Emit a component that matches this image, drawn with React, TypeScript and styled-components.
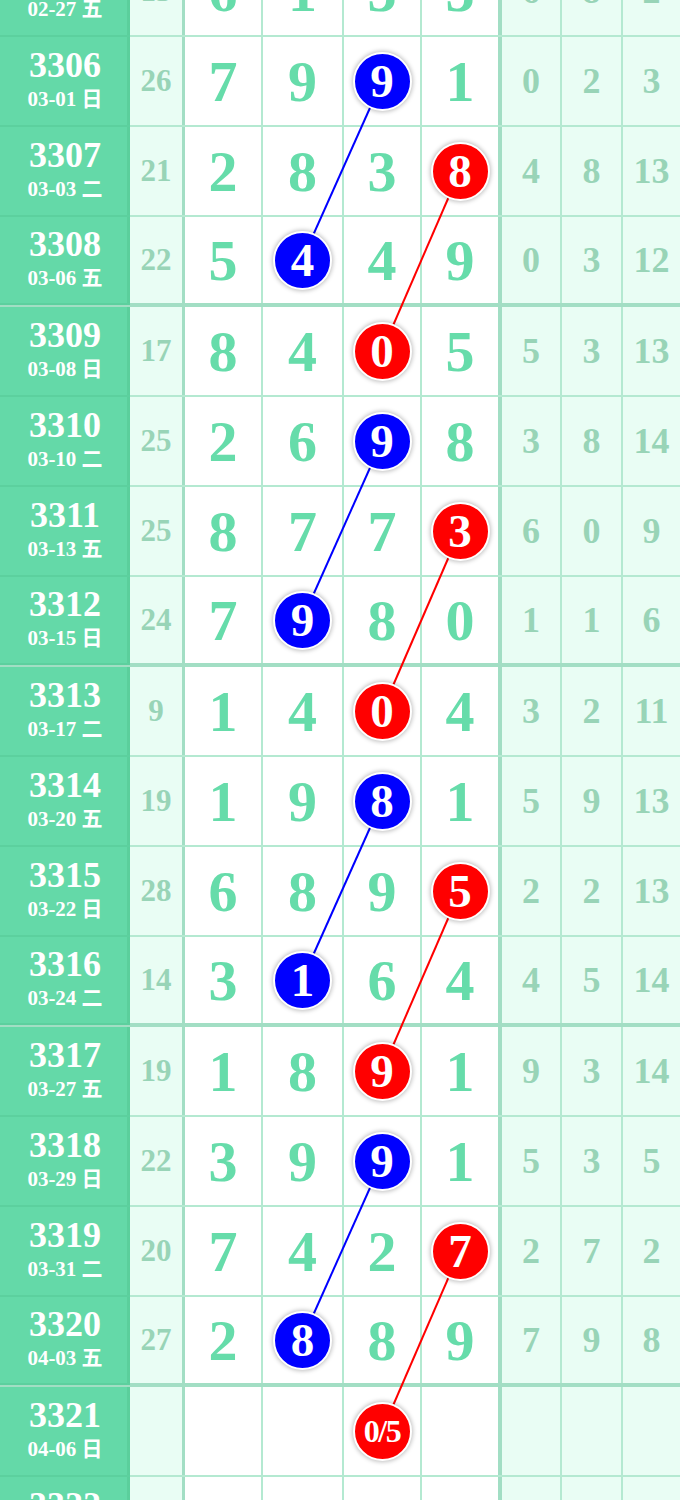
import React from 'react';
import styled, { createGlobalStyle } from 'styled-components';

const MINT = '#66dcaa';
const MUTED = '#98d4b7';
const PALE = '#e9fdf4';
const LINE = '#b4e9d1';
const LINE_THICK = '#a2dec4';
const ROW_H = 90;
const TOP_OFFSET = -53;

type Ball = { col: number; text: string; color: 'blue' | 'red' };

type Draw = {
  issue: string;
  date: string;
  sum?: number;
  digits: number[];
  extra: number[];
  ball?: Ball;
};

const draws: Draw[] = [
  { issue: '3305', date: '02-27 五', sum: 13, digits: [6, 1, 3, 3], extra: [6, 8, 2] },
  { issue: '3306', date: '03-01 日', sum: 26, digits: [7, 9, 9, 1], extra: [0, 2, 3], ball: { col: 2, text: '9', color: 'blue' } },
  { issue: '3307', date: '03-03 二', sum: 21, digits: [2, 8, 3, 8], extra: [4, 8, 13], ball: { col: 3, text: '8', color: 'red' } },
  { issue: '3308', date: '03-06 五', sum: 22, digits: [5, 4, 4, 9], extra: [0, 3, 12], ball: { col: 1, text: '4', color: 'blue' } },
  { issue: '3309', date: '03-08 日', sum: 17, digits: [8, 4, 0, 5], extra: [5, 3, 13], ball: { col: 2, text: '0', color: 'red' } },
  { issue: '3310', date: '03-10 二', sum: 25, digits: [2, 6, 9, 8], extra: [3, 8, 14], ball: { col: 2, text: '9', color: 'blue' } },
  { issue: '3311', date: '03-13 五', sum: 25, digits: [8, 7, 7, 3], extra: [6, 0, 9], ball: { col: 3, text: '3', color: 'red' } },
  { issue: '3312', date: '03-15 日', sum: 24, digits: [7, 9, 8, 0], extra: [1, 1, 6], ball: { col: 1, text: '9', color: 'blue' } },
  { issue: '3313', date: '03-17 二', sum: 9, digits: [1, 4, 0, 4], extra: [3, 2, 11], ball: { col: 2, text: '0', color: 'red' } },
  { issue: '3314', date: '03-20 五', sum: 19, digits: [1, 9, 8, 1], extra: [5, 9, 13], ball: { col: 2, text: '8', color: 'blue' } },
  { issue: '3315', date: '03-22 日', sum: 28, digits: [6, 8, 9, 5], extra: [2, 2, 13], ball: { col: 3, text: '5', color: 'red' } },
  { issue: '3316', date: '03-24 二', sum: 14, digits: [3, 1, 6, 4], extra: [4, 5, 14], ball: { col: 1, text: '1', color: 'blue' } },
  { issue: '3317', date: '03-27 五', sum: 19, digits: [1, 8, 9, 1], extra: [9, 3, 14], ball: { col: 2, text: '9', color: 'red' } },
  { issue: '3318', date: '03-29 日', sum: 22, digits: [3, 9, 9, 1], extra: [5, 3, 5], ball: { col: 2, text: '9', color: 'blue' } },
  { issue: '3319', date: '03-31 二', sum: 20, digits: [7, 4, 2, 7], extra: [2, 7, 2], ball: { col: 3, text: '7', color: 'red' } },
  { issue: '3320', date: '04-03 五', sum: 27, digits: [2, 8, 8, 9], extra: [7, 9, 8], ball: { col: 1, text: '8', color: 'blue' } },
  { issue: '3321', date: '04-06 日', digits: [], extra: [], ball: { col: 2, text: '0/5', color: 'red' } },
  { issue: '3322', date: '04-08 二', digits: [], extra: [] },
];

// centre x of each digit column (content box)
const DIGIT_X = [223, 302, 382, 460];

// a ball is joined to the ball two draws later when it steps one column left
const links: { from: number; to: number; color: string }[] = [];
draws.forEach((d, i) => {
  if (!d.ball) return;
  const next = draws[i + 2];
  if (next && next.ball && next.ball.color === d.ball.color && next.ball.col < d.ball.col) {
    links.push({ from: i, to: i + 2, color: d.ball.color === 'blue' ? '#0000ff' : '#ff0000' });
  }
});

const GlobalStyle = createGlobalStyle`
  html, body {
    margin: 0;
    padding: 0;
    background: #fff;
    overflow: hidden;
  }
  body {
    font-family: 'Liberation Serif', 'Noto Sans CJK SC', serif;
  }
`;

const Board = styled.div`
  position: relative;
  width: 680px;
  margin-top: ${TOP_OFFSET}px;
`;

const Row = styled.div<{ $thick: boolean }>`
  display: grid;
  grid-template-columns: 130px 55px 78px 81px 78px 80px 60px 61px 57px;
  height: ${ROW_H}px;
  box-sizing: border-box;
  border-bottom: ${(p) => (p.$thick ? `4px solid ${LINE_THICK}` : `2px solid ${LINE}`)};
`;

const IssueCell = styled.div`
  background: #64d9a8;
  color: #fff;
  font-weight: 700;
  display: flex;
  flex-direction: column;
  align-items: center;
  justify-content: center;
  box-shadow: inset -3px 0 0 #5bcf9c, 0 2px 0 #5cd09e;
  padding-bottom: 4px;
`;

const IssueNo = styled.div`
  font-size: 36px;
  line-height: 34px;
`;

const IssueDate = styled.div`
  font-size: 21px;
  line-height: 22px;
  margin-top: 6px;
`;

const SumCell = styled.div`
  background: ${PALE};
  border-right: 3px solid ${LINE_THICK};
  color: ${MUTED};
  font-weight: 700;
  font-size: 31px;
  display: flex;
  align-items: center;
  justify-content: center;
`;

const DigitCell = styled.div<{ $last: boolean }>`
  background: #fff;
  border-right: ${(p) => (p.$last ? `4px solid ${LINE_THICK}` : `2px solid ${LINE}`)};
  color: ${MINT};
  font-weight: 700;
  font-size: 58px;
  display: flex;
  align-items: center;
  justify-content: center;
`;

const ExtraCell = styled.div<{ $last: boolean }>`
  background: ${PALE};
  border-right: ${(p) => (p.$last ? 'none' : `2px solid ${LINE}`)};
  color: ${MUTED};
  font-weight: 700;
  font-size: 36px;
  display: flex;
  align-items: center;
  justify-content: center;
`;

const BallMark = styled.div<{ $color: 'blue' | 'red'; $small: boolean }>`
  position: relative;
  z-index: 2;
  width: 55px;
  height: 55px;
  border-radius: 50%;
  background: ${(p) => (p.$color === 'blue' ? '#0000ff' : '#ff0000')};
  border: 2px solid #fff;
  box-shadow: 0 0 4px 1px rgba(0, 0, 0, 0.25);
  color: #fff;
  font-size: ${(p) => (p.$small ? '32px' : '47px')};
  letter-spacing: ${(p) => (p.$small ? '-1.5px' : '0')};
  display: flex;
  align-items: center;
  justify-content: center;
  line-height: 1;
`;

const TrendLayer = styled.svg`
  position: absolute;
  left: 0;
  top: 0;
  z-index: 1;
  pointer-events: none;
`;

const centreY = (i: number) => i * ROW_H + (i % 4 === 3 ? 43 : 44);

export default function App() {
  const height = draws.length * ROW_H;
  return (
    <>
      <GlobalStyle />
      <Board>
        {draws.map((d, i) => (
          <Row key={d.issue} $thick={i % 4 === 3}>
            <IssueCell>
              <IssueNo>{d.issue}</IssueNo>
              <IssueDate>{d.date}</IssueDate>
            </IssueCell>
            <SumCell>{d.sum ?? ''}</SumCell>
            {[0, 1, 2, 3].map((c) => (
              <DigitCell key={c} $last={c === 3}>
                {d.ball && d.ball.col === c ? (
                  <BallMark $color={d.ball.color} $small={d.ball.text.length > 1}>
                    {d.ball.text}
                  </BallMark>
                ) : (
                  d.digits[c] ?? ''
                )}
              </DigitCell>
            ))}
            {[0, 1, 2].map((c) => (
              <ExtraCell key={c} $last={c === 2}>
                {d.extra[c] ?? ''}
              </ExtraCell>
            ))}
          </Row>
        ))}
        <TrendLayer width={680} height={height} viewBox={`0 0 680 ${height}`}>
          {links.map((l) => (
            <line
              key={`${l.from}-${l.to}`}
              x1={DIGIT_X[draws[l.from].ball!.col]}
              y1={centreY(l.from)}
              x2={DIGIT_X[draws[l.to].ball!.col]}
              y2={centreY(l.to)}
              stroke={l.color}
              strokeWidth={2}
            />
          ))}
        </TrendLayer>
      </Board>
    </>
  );
}
